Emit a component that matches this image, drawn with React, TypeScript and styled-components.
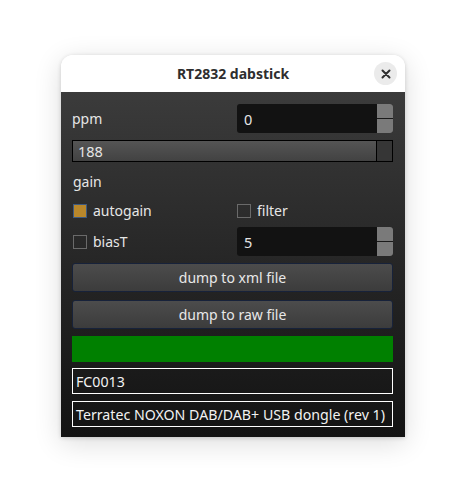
import React from "react";
import styled, { createGlobalStyle } from "styled-components";

const Global = createGlobalStyle`
  html, body { margin: 0; padding: 0; background: #ffffff; }
  body { width: 466px; height: 504px; overflow: hidden; font-family: "Noto Sans", sans-serif; }
`;

const Page = styled.div`
  padding: 55px 0 0 61px;
`;

const Window = styled.div`
  width: 344px;
  height: 382px;
  border-radius: 12px 12px 0 0;
  overflow: hidden;
  display: flex;
  flex-direction: column;
  box-shadow: 0 1px 4px rgba(0, 0, 0, 0.16), 0 6px 28px rgba(0, 0, 0, 0.14);
`;

const TitleBar = styled.div`
  height: 37px;
  flex: none;
  background: #ffffff;
  position: relative;
  display: flex;
  align-items: center;
  justify-content: center;
  font-family: "Noto Sans", sans-serif;
  font-weight: 700;
  font-size: 14px;
  color: #2e2e2e;
`;

const CloseButton = styled.div`
  position: absolute;
  right: 8px;
  top: 7px;
  width: 23px;
  height: 23px;
  border-radius: 50%;
  background: #ebebeb;
  display: flex;
  align-items: center;
  justify-content: center;
`;

const Body = styled.div`
  flex: 1;
  background: linear-gradient(to bottom, #3b3b3b 0%, #262626 50%, #131313 100%);
  padding: 12px 12px 0 11px;
  display: flex;
  flex-direction: column;
  font-family: "Noto Sans", sans-serif;
  font-size: 14px;
  color: #e6e6e6;
`;

const Row = styled.div<{ $mt?: number; $h: number }>`
  margin-top: ${(p) => p.$mt ?? 0}px;
  height: ${(p) => p.$h}px;
  display: grid;
  grid-template-columns: 164px 157px;
  align-items: end;
`;

const Cell = styled.div`
  display: flex;
  align-items: center;
  height: 100%;
`;

const Label = styled.div<{ $mt?: number; $h: number }>`
  margin-top: ${(p) => p.$mt ?? 0}px;
  height: ${(p) => p.$h}px;
  display: flex;
  align-items: center;
  padding-left: 1px;
`;

const Spin = styled.div`
  height: 29px;
  margin-left: 1px;
  background: #121212;
  border-radius: 3px;
  display: flex;
  overflow: hidden;
`;

const SpinValue = styled.div`
  flex: 1;
  display: flex;
  align-items: center;
  padding-left: 7px;
  font-size: 14.5px;
`;

const SpinButtons = styled.div`
  width: 16px;
  display: flex;
  flex-direction: column;
  gap: 1px;
  background: #1a1a1a;
`;

const SpinArrow = styled.div`
  flex: 1;
  background: #7a7a7a;
`;

const Slider = styled.div<{ $mt?: number }>`
  margin-top: ${(p) => p.$mt ?? 0}px;
  height: 22px;
  box-sizing: border-box;
  border: 1px solid #000000;
  display: flex;
  background: linear-gradient(to bottom, #555555, #424242);
`;

const SliderValue = styled.div`
  flex: 1;
  display: flex;
  align-items: center;
  padding-left: 5px;
  font-size: 14.5px;
`;

const SliderHandle = styled.div`
  width: 15px;
  border-left: 1px solid #000000;
  background: #363636;
`;

const Check = styled.div`
  display: flex;
  align-items: center;
  gap: 6px;
  padding-left: 1px;
`;

const Box = styled.div<{ $checked?: boolean }>`
  width: 14px;
  height: 14px;
  box-sizing: border-box;
  border: 1px solid ${(p) => (p.$checked ? "#3e5a80" : "#6a6a6a")};
  background: ${(p) => (p.$checked ? "#b8872b" : "transparent")};
`;

const Button = styled.div<{ $mt?: number }>`
  margin-top: ${(p) => p.$mt ?? 0}px;
  height: 29px;
  box-sizing: border-box;
  border: 1px solid #17223a;
  border-radius: 3px;
  background: linear-gradient(to bottom, #4c4c4c, #3c3c3c);
  display: flex;
  align-items: center;
  justify-content: center;
  font-size: 14px;
  color: #e8e8e8;
`;

const Bar = styled.div<{ $mt?: number }>`
  margin-top: ${(p) => p.$mt ?? 0}px;
  height: 26px;
  background: #008000;
`;

const InfoBox = styled.div<{ $mt?: number }>`
  margin-top: ${(p) => p.$mt ?? 0}px;
  height: 26px;
  box-sizing: border-box;
  border: 1.5px solid #ffffff;
  display: flex;
  align-items: center;
  padding-left: 3px;
  font-size: 14.2px;
  color: #f2f2f2;
  white-space: nowrap;
`;

function SpinBox({ value }: { value: string }) {
  return (
    <Spin>
      <SpinValue>{value}</SpinValue>
      <SpinButtons>
        <SpinArrow />
        <SpinArrow />
      </SpinButtons>
    </Spin>
  );
}

export default function App() {
  return (
    <>
      <Global />
      <Page>
        <Window>
          <TitleBar>
            RT2832 dabstick
            <CloseButton>
              <svg width="10" height="10" viewBox="0 0 10 10">
                <path d="M1.5 1.5 L8.5 8.5 M8.5 1.5 L1.5 8.5" stroke="#2e2e2e" strokeWidth="2" strokeLinecap="round" />
              </svg>
            </CloseButton>
          </TitleBar>
          <Body>
            <Row $h={29}>
              <Cell>ppm</Cell>
              <SpinBox value="0" />
            </Row>
            <Slider $mt={7}>
              <SliderValue>188</SliderValue>
              <SliderHandle />
            </Slider>
            <Label $mt={7} $h={25}>gain</Label>
            <Row $mt={7} $h={18}>
              <Check>
                <Box $checked />
                autogain
              </Check>
              <Check>
                <Box />
                filter
              </Check>
            </Row>
            <Row $mt={7} $h={30}>
              <Check style={{ alignSelf: "center", marginTop: "1px" }}>
                <Box />
                biasT
              </Check>
              <SpinBox value="5" />
            </Row>
            <Button $mt={7}>dump to xml file</Button>
            <Button $mt={8}>dump to raw file</Button>
            <Bar $mt={7} />
            <InfoBox $mt={6}>FC0013</InfoBox>
            <InfoBox $mt={7}>Terratec NOXON DAB/DAB+ USB dongle (rev 1)</InfoBox>
          </Body>
        </Window>
      </Page>
    </>
  );
}
